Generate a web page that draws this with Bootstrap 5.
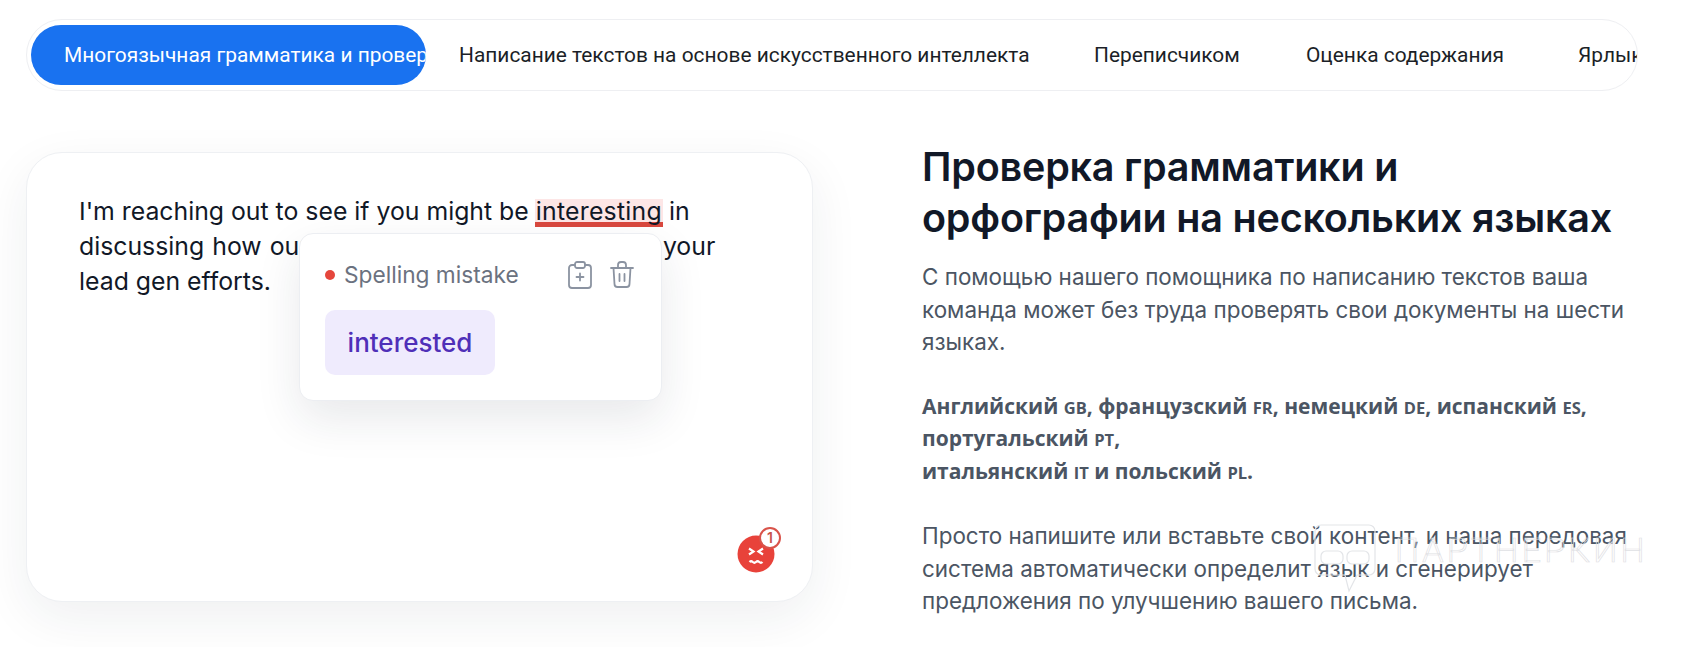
<!DOCTYPE html>
<html lang="ru"><head><meta charset="utf-8"><title>Grammar</title>
<link href="https://cdn.jsdelivr.net/npm/bootstrap@5.3.0/dist/css/bootstrap.min.css" rel="stylesheet">
<style>
html,body{height:647px;overflow:hidden;background:#fff}
body{font-family:Inter,"Noto Sans",sans-serif;color:#111827;position:relative}
.page-wrap{padding:19px 60px 0 26px;width:1697px}
.tabs-bar{height:72px;border:1px solid #eeeff2;border-radius:36px;padding:5px 0 5px 4px;overflow:hidden;width:1612px;flex-wrap:nowrap;align-items:center}
.tab-item{height:60px;flex:none;display:flex;align-items:center;font-family:Roboto,sans-serif;font-size:20.9px;color:#1b1f27;white-space:nowrap;overflow:hidden;padding-top:2px}
.tab-active{width:395px;background:#1972f0;color:#fff;border-radius:30px;padding-left:33px}
.tab-2{margin-left:33px;width:570px}.tab-3{margin-left:65px;width:147px}.tab-4{margin-left:65px;width:199px}.tab-5{margin-left:73px;width:64px}
.main-row{margin-top:61px;flex-wrap:nowrap}
.editor-box{width:787px;height:450px;flex:none;border:1px solid #eef0f3;border-radius:36px;background:#fff;box-shadow:0 16px 50px rgba(31,41,55,.07);padding:41px 52px;position:relative;font-size:24.8px;line-height:35px;color:#111827}
.editor-text{width:680px;margin:0;white-space:nowrap}
.covered-words{word-spacing:1.100px}
.bad-word{display:inline-block;line-height:24px;padding:0 1px 4px;margin:0 -1px;letter-spacing:.25px;background:linear-gradient(to top,#d9483e 5px,#fde6e6 5px)}
.tip-box{position:absolute;left:272px;top:80px;width:363px;height:168px;background:#fff;border:1px solid #eceef2;border-radius:14px;box-shadow:0 18px 45px rgba(31,41,55,.1);padding:26px 25px}
.tip-head{height:30px;font-size:22.7px;color:#6b7280;line-height:30px}
.tip-dot{width:10px;height:10px;border-radius:50%;background:#e5463c;margin-right:9px;flex:none}
.tip-icons{margin-left:auto;gap:16px;margin-right:1px}
.tip-fix{display:inline-block;margin-top:20px;width:170px;height:65px;background:#efebfd;border-radius:10px;color:#4f2fb8;font-size:26px;font-weight:500;line-height:65px;text-align:center}
.emoji-wrap{position:absolute;left:709px;top:373px;width:48px;height:48px}
.side-col{margin-left:109px;width:775px;flex:none}
.side-title{font-family:Inter,sans-serif;font-weight:600;font-size:39.5px;line-height:51px;color:#111827;margin:-10px 0 17px;letter-spacing:-.2px;white-space:nowrap}
.side-text{font-family:Inter,sans-serif;font-size:22.45px;line-height:32.500px;color:#4b5563;margin:0 0 33px;white-space:nowrap}
.side-first{margin-bottom:31px}
.side-langs{font-family:"Open Sans",sans-serif;font-weight:700;font-size:21px;line-height:32.500px;color:#4b5563;margin:0 0 33px;white-space:nowrap}
.side-langs small{font-size:16.500px;line-height:1}
.mark-wm{position:absolute;left:1313px;top:523px;width:340px;height:72px;color:transparent;pointer-events:none}
.mark-wm span{position:absolute;left:82px;top:7px;font-family:Roboto,sans-serif;font-weight:300;font-size:34px;line-height:40px;letter-spacing:3.2px;-webkit-text-stroke:.7px #dfe1e4;white-space:nowrap}
</style></head><body>
<div class="page-wrap">
<div class="tabs-bar d-flex">
<div class="tab-item tab-active">Многоязычная грамматика и проверка орфографии</div>
<div class="tab-item tab-2">Написание текстов на основе искусственного интеллекта</div>
<div class="tab-item tab-3">Переписчиком</div>
<div class="tab-item tab-4">Оценка содержания</div>
<div class="tab-item tab-5">Ярлыки</div>
</div>
<div class="main-row d-flex">
<div class="editor-box">
<p class="editor-text">I'm reaching out to see if you might be <span class="bad-word">interesting</span> in<br><span class="covered-words">discussing how our product should help improve your</span><br>lead gen efforts.</p>
<div class="tip-box">
<div class="tip-head d-flex align-items-center"><span class="tip-dot"></span>Spelling mistake
<div class="tip-icons d-flex align-items-center">
<svg width="26" height="28" viewBox="0 0 26 28" fill="none" stroke="#8b93a1" stroke-width="1.8" stroke-linecap="round" stroke-linejoin="round"><path d="M8 4H5a3 3 0 0 0-3 3v17a3 3 0 0 0 3 3h16a3 3 0 0 0 3-3V7a3 3 0 0 0-3-3h-3"/><rect x="8" y="1" width="10" height="6" rx="2"/><path d="M13 12.500v7M9.500 16h7"/></svg>
<svg width="26" height="28" viewBox="0 0 26 28" fill="none" stroke="#8b93a1" stroke-width="1.8" stroke-linecap="round" stroke-linejoin="round"><path d="M2 7h22M9 7V4a3 3 0 0 1 3-3h2a3 3 0 0 1 3 3v3M4.500 7l1 16a3 3 0 0 0 3 3h9a3 3 0 0 0 3-3l1-16M10.500 13v7M15.500 13v7"/></svg>
</div></div>
<span class="tip-fix">interested</span>
</div>
<div class="emoji-wrap">
<svg width="48" height="48" viewBox="0 0 48 48"><circle cx="20" cy="28" r="18.500" fill="#e8423a"/><path d="M13 22.500l4.500 3-4.500 3M27 22.500l-4.500 3 4.500 3" fill="none" stroke="#fff" stroke-width="2.200"/><path d="M13.500 36q1.600-1.500 3.250 0t3.250 0 3.250 0 3.250 0" fill="none" stroke="#fff" stroke-width="2.200"/><circle cx="34" cy="12" r="10" fill="#fff" stroke="#d9534a" stroke-width="2"/><text x="34" y="17" text-anchor="middle" font-family="Inter,sans-serif" font-size="14" font-weight="600" fill="#c9534b">1</text></svg>
</div>
</div>
<div class="side-col">
<h2 class="side-title">Проверка грамматики и<br>орфографии на нескольких языках</h2>
<p class="side-text side-first">С помощью нашего помощника по написанию текстов ваша<br>команда может без труда проверять свои документы на шести<br>языках.</p>
<p class="side-langs">Английский <small>GB</small>, французский <small>FR</small>, немецкий <small>DE</small>, испанский <small>ES</small>,<br>португальский <small>PT</small>,<br>итальянский <small>IT</small> и польский <small>PL</small>.</p>
<p class="side-text">Просто напишите или вставьте свой контент, и наша передовая<br>система автоматически определит язык и сгенерирует<br>предложения по улучшению вашего письма.</p>
</div>
</div>
</div>
<div class="mark-wm">
<svg width="64" height="70" viewBox="0 0 64 70" fill="none" stroke="#e3e5e8" stroke-width="1.2"><path d="M8 2h48a6 6 0 0 1 6 6v38a6 6 0 0 1-6 6H44l-8 16-4-16H8a6 6 0 0 1-6-6V8a6 6 0 0 1 6-6z"/><rect x="8" y="28" width="22" height="13" rx="5"/><rect x="34" y="28" width="22" height="13" rx="5"/></svg>
<span>ПАРТНЕРКИН</span>
</div>
</body></html>
